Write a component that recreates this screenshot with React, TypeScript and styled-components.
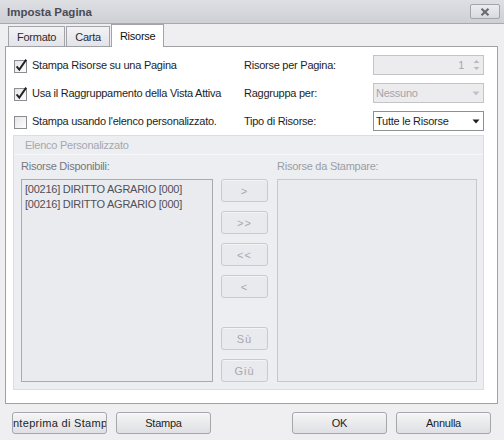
import React from 'react';
import styled, { createGlobalStyle } from 'styled-components';

const Global = createGlobalStyle`
  html, body { margin: 0; padding: 0; background: #efeff1; }
  body {
    font-family: "Liberation Sans", Arial, sans-serif;
    font-size: 11px;
    letter-spacing: -0.25px;
    color: #1e1e1e;
  }
  * { box-sizing: border-box; }
`;

const Window = styled.div`
  width: 504px;
  height: 440px;
  display: flex;
  flex-direction: column;
  background: #efeff1;
  overflow: hidden;
`;

const TitleBar = styled.div`
  height: 24px;
  border-bottom: 1px solid #a8a9af;
  background: linear-gradient(#dedfe3, #cfd0d5);
  display: flex;
  align-items: center;
  justify-content: space-between;
  padding: 0 4px 0 7px;
`;

const Title = styled.span`
  font-weight: bold;
  font-size: 11.5px;
  letter-spacing: 0;
  color: #4a4b56;
`;

const CloseButton = styled.div`
  width: 30px;
  height: 15px;
  border: 1px solid #a3a4aa;
  border-radius: 2px;
  background: linear-gradient(#ededf0, #d9dade);
  display: flex;
  align-items: center;
  justify-content: center;
`;

const TabStrip = styled.div`
  height: 22px;
  display: flex;
  align-items: flex-end;
  gap: 1px;
  padding-left: 8px;
`;

const Tab = styled.div<{ $active?: boolean }>`
  position: relative;
  z-index: 2;
  height: ${(p) => (p.$active ? '23px' : '20px')};
  margin-bottom: ${(p) => (p.$active ? '-1px' : '0')};
  padding: 0 8px;
  display: flex;
  align-items: center;
  padding-bottom: ${(p) => (p.$active ? '1px' : '0')};
  border: 1px solid #a3a4aa;
  border-bottom: none;
  background: ${(p) => (p.$active ? '#ffffff' : 'linear-gradient(#f3f3f5, #e3e4e8)')};
  color: ${(p) => (p.$active ? '#111' : '#2a2a2e')};
`;

const Panel = styled.div`
  margin: 0 6px 0 5px;
  height: 358px;
  background: #ffffff;
  border: 1px solid #a0a1a7;
  display: flex;
  flex-direction: column;
`;

const Options = styled.div`
  display: grid;
  grid-template-columns: 230px 129px 111px;
  grid-auto-rows: 20px;
  row-gap: 8px;
  align-items: center;
  padding: 8px 0 0 8px;
`;

const CheckRow = styled.label`
  display: flex;
  align-items: center;
  gap: 3px;
  white-space: nowrap;
`;

const FieldLabel = styled.span`
  white-space: nowrap;
`;

const Field = styled.div<{ $disabled?: boolean }>`
  height: 20px;
  border: 1px solid ${(p) => (p.$disabled ? '#c3c4c8' : '#8f9095')};
  background: ${(p) => (p.$disabled ? '#ececee' : '#ffffff')};
  color: ${(p) => (p.$disabled ? '#a3a4ab' : '#1e1e1e')};
  display: flex;
  align-items: center;
  padding-left: 2px;
  white-space: nowrap;
`;

const FieldText = styled.span<{ $right?: boolean }>`
  flex: 1;
  text-align: ${(p) => (p.$right ? 'right' : 'left')};
  padding-right: ${(p) => (p.$right ? '5px' : '0')};
`;

const ArrowBox = styled.div`
  width: 14px;
  height: 100%;
  display: flex;
  align-items: center;
  justify-content: center;
`;

const Group = styled.div`
  margin: 4px 0 0 7px;
  width: 471px;
  height: 255px;
  background: #eceef1;
  border: 1px solid #dcdde1;
  display: flex;
  flex-direction: column;
`;

const GroupHeader = styled.div`
  height: 19px;
  padding-left: 11px;
  display: flex;
  align-items: center;
  color: #a6a7ae;
  border-bottom: 1px solid #f6f7f9;
`;

const GroupBody = styled.div`
  display: grid;
  grid-template-columns: 192px 47px 201px;
  grid-template-rows: 12px 203px;
  column-gap: 8px;
  row-gap: 7px;
  padding: 5px 0 0 7px;
`;

const ListLabel = styled.div<{ $muted?: boolean; $right?: boolean }>`
  line-height: 12px;
  color: ${(p) => (p.$muted ? '#9c9da5' : '#76777e')};
  width: ${(p) => (p.$right ? '200px' : 'auto')};
  justify-self: ${(p) => (p.$right ? 'end' : 'stretch')};
  white-space: nowrap;
`;

const ListBox = styled.div<{ $light?: boolean; $right?: boolean }>`
  background: #eaebef;
  border: 1px solid ${(p) => (p.$light ? '#c7c8cd' : '#a9aaaf')};
  padding: 2px 0 0 3px;
  width: ${(p) => (p.$right ? '200px' : 'auto')};
  justify-self: ${(p) => (p.$right ? 'end' : 'stretch')};
`;

const ListItem = styled.div`
  line-height: 15px;
  color: #505058;
  white-space: nowrap;
`;

const ButtonColumn = styled.div`
  display: flex;
  flex-direction: column;
  gap: 9px;
`;

const MoveButton = styled.div<{ $push?: boolean }>`
  height: 23px;
  border: 1px solid #c9cacf;
  border-radius: 3px;
  background: #e9eaee;
  box-shadow: inset 0 1px 0 #f3f4f6;
  color: #a6a7ae;
  display: flex;
  align-items: center;
  justify-content: center;
  margin-top: ${(p) => (p.$push ? 'auto' : '0')};
  letter-spacing: 1px;
`;

const Footer = styled.div`
  display: flex;
  gap: 9px;
  padding: 8px 13px 0 12px;
`;

const Spacer = styled.div`
  flex: 1;
`;

const FooterButton = styled.div<{ $wide?: boolean }>`
  width: 95px;
  height: 22px;
  border: 1px solid #a6a7ac;
  border-radius: 3px;
  background: linear-gradient(#f5f5f6, #dfe0e3);
  box-shadow: inset 0 1px 0 #fbfbfc;
  color: #1e1e1e;
  display: flex;
  align-items: center;
  justify-content: center;
  overflow: hidden;
  white-space: nowrap;
  letter-spacing: ${(p) => (p.$wide ? '0.3px' : '-0.25px')};
`;

const CheckBox: React.FC<{ checked?: boolean }> = ({ checked }) => (
  <svg width="15" height="15" viewBox="0 0 15 15">
    <defs>
      <linearGradient id="cbg" x1="0" y1="0" x2="1" y2="1">
        <stop offset="0" stopColor="#e4e4e6" />
        <stop offset="1" stopColor="#ffffff" />
      </linearGradient>
    </defs>
    <rect x="0.5" y="2.5" width="12" height="12" fill="url(#cbg)" stroke="#8c8d92" />
    {checked && (
      <path d="M2.6 8.4 L5.3 11.6 L12.2 1.6" fill="none" stroke="#232326" strokeWidth="1.9" />
    )}
  </svg>
);

const SpinArrows: React.FC = () => (
  <svg width="9" height="16" viewBox="0 0 9 16">
    <path d="M1.5 6 L4.5 3 L7.5 6 Z" fill="#b9bac0" />
    <path d="M1.5 10 L4.5 13 L7.5 10 Z" fill="#b9bac0" />
  </svg>
);

const DropArrow: React.FC<{ color: string }> = ({ color }) => (
  <svg width="8" height="5" viewBox="0 0 8 5">
    <path d="M0.5 0.5 L7.5 0.5 L4 4.5 Z" fill={color} />
  </svg>
);

const CloseIcon: React.FC = () => (
  <svg width="10" height="8" viewBox="0 0 10 8">
    <path d="M1.5 0.8 L8.5 7.2 M8.5 0.8 L1.5 7.2" stroke="#6b6c72" strokeWidth="2.2" />
  </svg>
);

export default function App() {
  return (
    <>
      <Global />
      <Window>
        <TitleBar>
          <Title>Imposta Pagina</Title>
          <CloseButton>
            <CloseIcon />
          </CloseButton>
        </TitleBar>
        <TabStrip>
          <Tab>Formato</Tab>
          <Tab>Carta</Tab>
          <Tab $active>Risorse</Tab>
        </TabStrip>
        <Panel>
          <Options>
            <CheckRow>
              <CheckBox checked />
              Stampa Risorse su una Pagina
            </CheckRow>
            <FieldLabel>Risorse per Pagina:</FieldLabel>
            <Field $disabled>
              <FieldText $right>1</FieldText>
              <ArrowBox>
                <SpinArrows />
              </ArrowBox>
            </Field>

            <CheckRow>
              <CheckBox checked />
              Usa il Raggruppamento della Vista Attiva
            </CheckRow>
            <FieldLabel>Raggruppa per:</FieldLabel>
            <Field $disabled>
              <FieldText>Nessuno</FieldText>
              <ArrowBox>
                <DropArrow color="#c1c2c7" />
              </ArrowBox>
            </Field>

            <CheckRow>
              <CheckBox />
              Stampa usando l'elenco personalizzato.
            </CheckRow>
            <FieldLabel>Tipo di Risorse:</FieldLabel>
            <Field>
              <FieldText>Tutte le Risorse</FieldText>
              <ArrowBox>
                <DropArrow color="#1e1e1e" />
              </ArrowBox>
            </Field>
          </Options>

          <Group>
            <GroupHeader>Elenco Personalizzato</GroupHeader>
            <GroupBody>
              <ListLabel>Risorse Disponibili:</ListLabel>
              <div />
              <ListLabel $muted $right>Risorse da Stampare:</ListLabel>

              <ListBox>
                <ListItem>[00216] DIRITTO AGRARIO [000]</ListItem>
                <ListItem>[00216] DIRITTO AGRARIO [000]</ListItem>
              </ListBox>
              <ButtonColumn>
                <MoveButton>&gt;</MoveButton>
                <MoveButton>&gt;&gt;</MoveButton>
                <MoveButton>&lt;&lt;</MoveButton>
                <MoveButton>&lt;</MoveButton>
                <MoveButton $push>Sù</MoveButton>
                <MoveButton>Giù</MoveButton>
              </ButtonColumn>
              <ListBox $light $right />
            </GroupBody>
          </Group>
        </Panel>
        <Footer>
          <FooterButton $wide>Anteprima di Stampa</FooterButton>
          <FooterButton>Stampa</FooterButton>
          <Spacer />
          <FooterButton>OK</FooterButton>
          <FooterButton>Annulla</FooterButton>
        </Footer>
      </Window>
    </>
  );
}
